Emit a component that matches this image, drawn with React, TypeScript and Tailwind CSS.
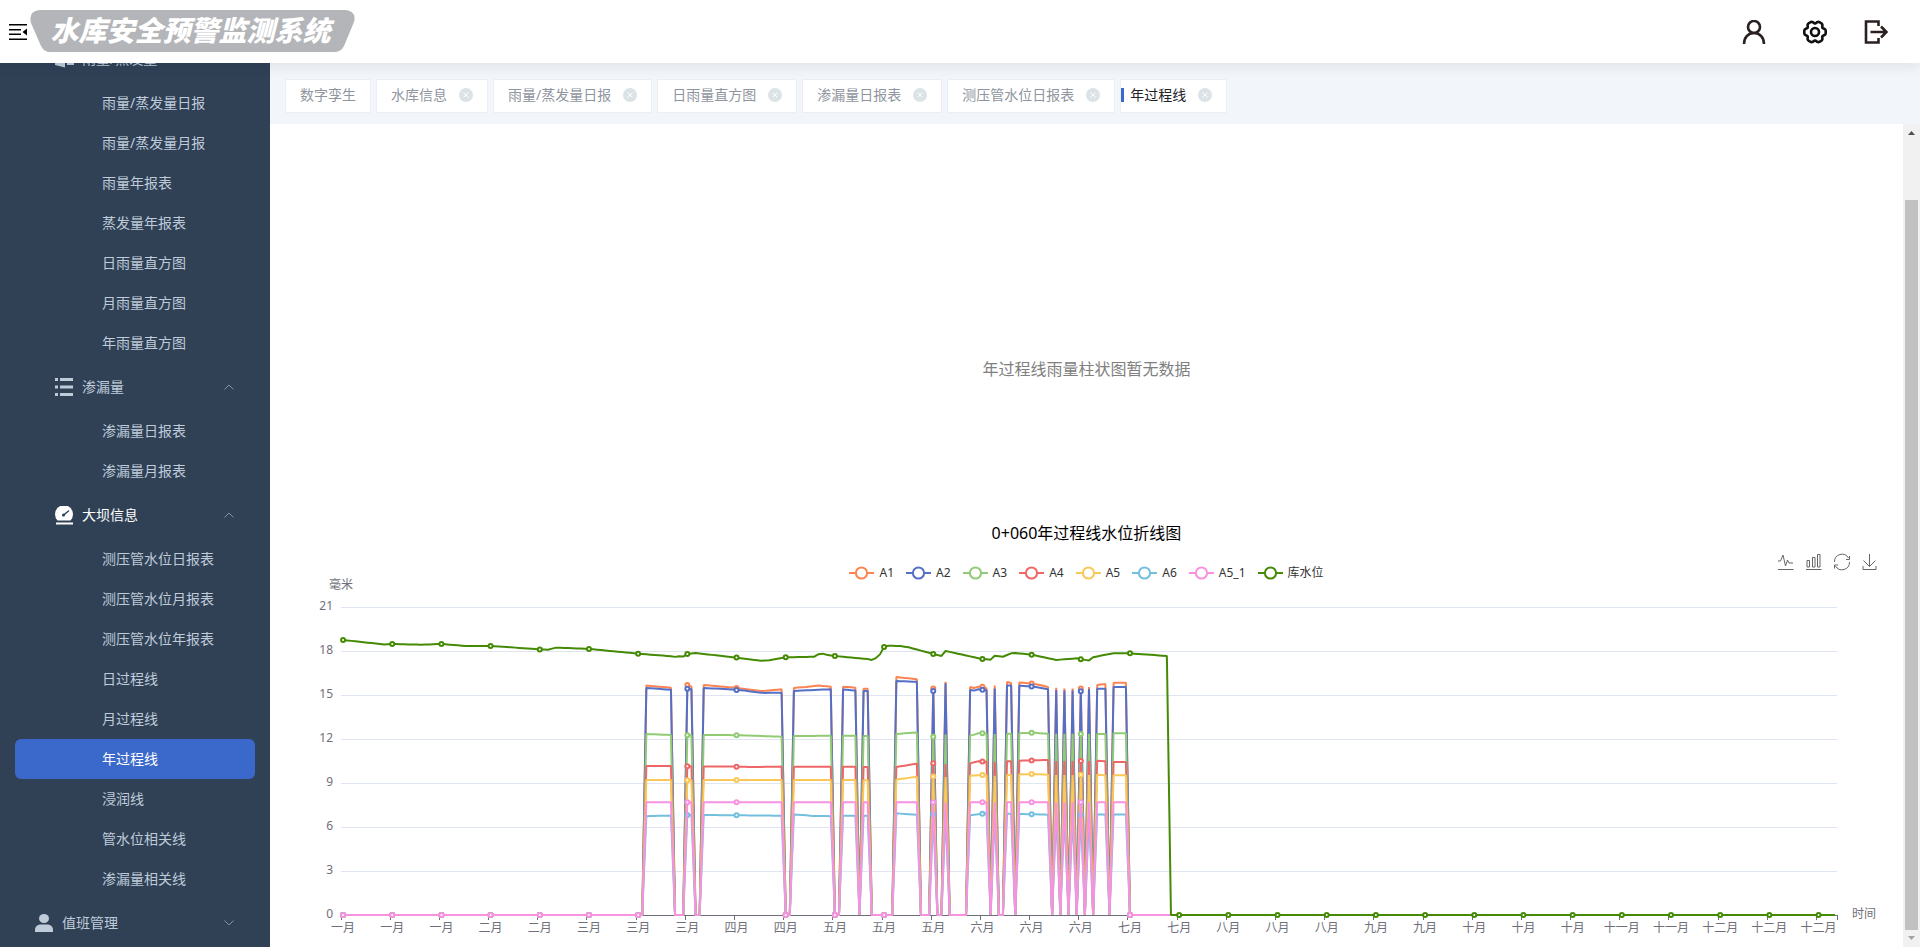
import { useLayoutEffect, useRef, useState } from "react";
import clsx from "clsx";

type Series = { name: string; color: string };
type Segment = { from: number; to: number; values: number[][] };

const MENU_RAIN = ["雨量/蒸发量日报", "雨量/蒸发量月报", "雨量年报表", "蒸发量年报表", "日雨量直方图", "月雨量直方图", "年雨量直方图"];
const MENU_SEEPAGE = ["渗漏量日报表", "渗漏量月报表"];
const MENU_DAM = ["测压管水位日报表", "测压管水位月报表", "测压管水位年报表", "日过程线", "月过程线", "年过程线", "浸润线", "管水位相关线", "渗漏量相关线"];

const TABS = ["数字孪生", "水库信息", "雨量/蒸发量日报", "日雨量直方图", "渗漏量日报表", "测压管水位日报表", "年过程线"];
const ACTIVE = "年过程线";

const SERIES: Series[] = [
  { name: "A1", color: "#fc8452" },
  { name: "A2", color: "#5470c6" },
  { name: "A3", color: "#91cc75" },
  { name: "A4", color: "#ee6666" },
  { name: "A5", color: "#fac858" },
  { name: "A6", color: "#73c0de" },
  { name: "A5_1", color: "#f892e0" },
  { name: "库水位", color: "#458a05" },
];

// day ranges with readings; outside of them the gauges report 0
const SEGMENTS: Segment[] = [
  { from: 74, to: 80, values: [[15.64, 15.5], [15.48, 15.36], [12.34, 12.27], [10.16], [9.2], [6.74, 6.78]] },
  { from: 84, to: 85, values: [[15.68, 15.57], [15.43, 15.4], [12.25], [10.14], [9.18], [6.82]] },
  { from: 88, to: 107, values: [[15.68, 15.57, 15.43, 15.27, 15.39], [15.48, 15.41, 15.32, 15.14, 15.16], [12.27, 12.27, 12.25, 12.2, 12.16], [10.12, 10.12, 10.09, 10.12], [9.2], [6.82, 6.77]] },
  { from: 110, to: 119, values: [[15.48, 15.55, 15.64, 15.57], [15.27, 15.34, 15.39], [12.2, 12.22], [10.11], [9.2], [6.86, 6.76, 6.74]] },
  { from: 122, to: 125, values: [[15.57, 15.5], [15.38, 15.3], [12.23], [10.11], [9.2], [6.77]] },
  { from: 127, to: 128, values: [[15.43], [15.27], [12.2], [10.09], [9.18], [6.77]] },
  { from: 135, to: 140, values: [[16.23, 16.07], [15.95, 15.9], [12.34, 12.45], [10.09, 10.32], [9.23, 9.43], [6.93, 6.84]] },
  { from: 144, to: 144, values: [[15.45], [15.27], [12.16], [10.34], [9.45], [6.86]] },
  { from: 147, to: 147, values: [[15.9], [15.8], [12.3], [10.3], [9.4], [6.86]] },
  { from: 153, to: 157, values: [[15.55, 15.48, 15.57, 15.57, 15.45], [15.34, 15.3, 15.39, 15.36, 15.32], [12.23, 12.3, 12.39, 12.39, 12.36], [10.34, 10.48, 10.45], [9.5, 9.55], [6.8, 6.93]] },
  { from: 159, to: 159, values: [[15.64], [15.45], [12.34], [10.45], [9.5], [6.9]] },
  { from: 162, to: 163, values: [[15.89, 15.82], [15.64], [12.36], [10.48], [9.55], [6.9]] },
  { from: 165, to: 172, values: [[15.86, 15.77, 15.55], [15.64, 15.57, 15.39], [12.39, 12.43, 12.36], [10.52, 10.57], [9.59, 9.61, 9.57], [6.89, 6.84]] },
  { from: 174, to: 174, values: [[15.5], [15.34], [12.36], [10.5], [9.55], [6.85]] },
  { from: 176, to: 176, values: [[15.45], [15.3], [12.36], [10.5], [9.55], [6.85]] },
  { from: 178, to: 178, values: [[15.45], [15.3], [12.36], [10.5], [9.55], [6.85]] },
  { from: 180, to: 180, values: [[15.45], [15.25], [12.34], [10.5], [9.57], [6.82]] },
  { from: 182, to: 182, values: [[15.55], [15.4], [12.36], [10.5], [9.55], [6.85]] },
  { from: 184, to: 186, values: [[15.68, 15.75], [15.43], [12.34], [10.52, 10.48], [9.57, 9.52], [6.86]] },
  { from: 188, to: 191, values: [[15.84], [15.55], [12.39], [10.43], [9.52], [6.86]] },
];

// [day of year, level] for the reservoir
const LEVELS: number[][] = [
  [0, 18.75], [10, 18.45], [12, 18.48], [19, 18.43], [24, 18.48], [30, 18.34], [36, 18.34], [42, 18.23], [48, 18.11],
  [50, 18.09], [52, 18.23], [60, 18.14], [72, 17.82], [80, 17.64], [81, 17.6], [82, 17.64], [83, 17.62], [84, 17.8],
  [86, 17.86], [96, 17.55], [100, 17.4], [102, 17.34], [104, 17.37], [108, 17.57], [115, 17.61], [116, 17.78],
  [117, 17.82], [118, 17.74], [120, 17.66], [128, 17.45], [129, 17.39], [130, 17.52], [131, 17.77], [132, 18.27],
  [133, 18.36], [136, 18.34], [138, 18.25], [144, 17.8], [146, 17.66], [147, 18], [156, 17.45], [158, 17.41],
  [159, 17.68], [161, 17.61], [163, 17.84], [164, 17.86], [168, 17.75], [174, 17.39], [179, 17.5], [180, 17.43],
  [182, 17.36], [183, 17.57], [186, 17.75], [188, 17.84], [192, 17.84], [201, 17.66], [202, 0], [364, 0],
];

const MONTHS = [
  "一月", "一月", "一月", "二月", "二月", "三月", "三月", "三月", "四月", "四月", "五月", "五月", "五月", "六月", "六月", "六月",
  "七月", "七月", "八月", "八月", "八月", "九月", "九月", "十月", "十月", "十月", "十一月", "十一月", "十二月", "十二月", "十二月",
];

const DAYS = 365;
const LABEL_STEP = 12;

function sample(values: number[], t: number) {
  const pos = t * (values.length - 1);
  const i = Math.min(Math.floor(pos), values.length - 1);
  const next = values[Math.min(i + 1, values.length - 1)];
  return values[i] + (next - values[i]) * (pos - i);
}

function gaugeData(index: number): number[] {
  const data: number[] = new Array(203).fill(0);
  SEGMENTS.forEach((seg) => {
    const values = index === 6 ? [7.68] : seg.values[index];
    for (let d = seg.from; d <= seg.to; d++) {
      data[d] = sample(values, seg.to === seg.from ? 0 : (d - seg.from) / (seg.to - seg.from));
    }
  });
  return data;
}

function reservoirData(): number[] {
  const data: number[] = [];
  for (let k = 0; k < LEVELS.length - 1; k++) {
    const [d0, v0] = LEVELS[k];
    const [d1, v1] = LEVELS[k + 1];
    for (let d = d0; d < d1; d++) data.push(v0 + ((v1 - v0) * (d - d0)) / (d1 - d0));
  }
  data.push(0);
  return data;
}

const DATA = SERIES.map((_, i) => (i === 7 ? reservoirData() : gaugeData(i)));

// outline of the settings cog: a circle with six soft lobes
const COG = Array.from({ length: 72 }, (_, i) => {
  const a = (i / 72) * Math.PI * 2;
  const r = 10 + 1.1 * Math.cos(6 * a) - 0.4 * Math.cos(12 * a);
  return `${(13 + r * Math.cos(a)).toFixed(2)},${(13 + r * Math.sin(a)).toFixed(2)}`;
}).join(" ");

function LineChart() {
  const box = useRef<HTMLDivElement>(null);
  const [width, setWidth] = useState(1633);

  useLayoutEffect(() => {
    const el = box.current;
    if (!el) return;
    const update = () => setWidth(el.clientWidth);
    update();
    const observer = new ResizeObserver(update);
    observer.observe(el);
    return () => observer.disconnect();
  }, []);

  const left = 71;
  const right = width - 66;
  const bottom = 334;
  const band = (right - left) / DAYS;
  const x = (day: number) => left + band * (day + 0.5);
  const y = (v: number) => bottom - (v * 44) / 3;

  return (
    <div ref={box} className="w-full">
      <svg width={width} height={366} className="block overflow-visible text-xs" fill="#6e7079">
        <text x={left} y={8} textAnchor="middle">毫米</text>
        {[0, 3, 6, 9, 12, 15, 18, 21].map((v) => (
          <g key={v}>
            {v > 0 && <line x1={left} x2={right} y1={y(v) + 0.5} y2={y(v) + 0.5} stroke="#e0e6f1" shapeRendering="crispEdges" />}
            <text x={left - 8} y={y(v) + 3} textAnchor="end">{v}</text>
          </g>
        ))}
        <line x1={left} x2={right} y1={bottom + 0.5} y2={bottom + 0.5} stroke="#6e7079" shapeRendering="crispEdges" />
        {MONTHS.map((m, k) => (
          <g key={k}>
            <line x1={left + band * LABEL_STEP * k} x2={left + band * LABEL_STEP * k} y1={bottom} y2={bottom + 5} stroke="#6e7079" shapeRendering="crispEdges" />
            <text x={x(k * LABEL_STEP)} y={bottom + 17} textAnchor="middle">{m}</text>
          </g>
        ))}
        <line x1={right} x2={right} y1={bottom} y2={bottom + 5} stroke="#6e7079" shapeRendering="crispEdges" />
        <text x={right + 15} y={bottom + 3}>时间</text>
        {SERIES.map((s, i) => (
          <g key={s.name} stroke={s.color} strokeWidth={2}>
            <polyline fill="none" strokeLinejoin="bevel" points={DATA[i].map((v, d) => `${x(d)},${y(v)}`).join(" ")} />
            {DATA[i].map((v, d) => (d % LABEL_STEP === 0 ? <circle key={d} cx={x(d)} cy={y(v)} r={2} fill="#fff" /> : null))}
          </g>
        ))}
      </svg>
    </div>
  );
}

function Chevron({ up }: { up?: boolean }) {
  return (
    <svg width="10" height="6" viewBox="0 0 10 6" className="ml-auto" fill="none" stroke="#8792a0">
      <path d={up ? "M0.5 5.5 5 1 9.5 5.5" : "M0.5 0.5 5 5 9.5 0.5"} />
    </svg>
  );
}

function MenuGroup({ title, icon, items, active }: { title: string; icon: React.ReactNode; items: string[]; active?: boolean }) {
  return (
    <div>
      <button className={clsx("flex h-12 w-full items-center gap-2 pr-9 pl-[55px]", active && "text-white")}>
        {icon}
        <span>{title}</span>
        <Chevron up />
      </button>
      {items.map((item) => (
        <a
          key={item}
          href="#"
          className={clsx("mx-[15px] flex h-10 items-center rounded-md pl-[87px]", item === ACTIVE && "bg-[#3b69cb] text-white")}
        >
          {item}
        </a>
      ))}
    </div>
  );
}

function Sidebar() {
  return (
    <nav className="flex w-[270px] shrink-0 flex-col justify-end overflow-hidden bg-[#304156] text-sm text-[#bfcbd9]">
      <MenuGroup
        title="雨量/蒸发量"
        items={MENU_RAIN}
        icon={
          <svg width="19" height="18" viewBox="0 0 19 18" fill="currentColor">
            <path d="M0 2h10v15.500L0 15zM12 6h7v9h-7z" />
          </svg>
        }
      />
      <MenuGroup
        title="渗漏量"
        items={MENU_SEEPAGE}
        icon={
          <svg width="19" height="18" viewBox="0 0 19 18" fill="currentColor">
            <path d="M5 0h13v3H5zM5 7.500h13v3H5zM5 15h13v3H5zM0 0h3v3H0zM0 7.500h3v3H0zM0 15h3v3H0z" />
          </svg>
        }
      />
      <MenuGroup
        title="大坝信息"
        items={MENU_DAM}
        active
        icon={
          <svg width="19" height="19" viewBox="0 0 19 19" fill="currentColor">
            <path d="M2.500 14.500A9 9 0 1 1 15.500 14.500z" />
            <path d="M1 16.500h17v2H1z" />
            <path d="M8 9.500 13.500 5" stroke="#304156" strokeWidth="1.500" strokeLinecap="round" />
            <circle cx="8.500" cy="9" r="1.500" fill="#304156" />
          </svg>
        }
      />
      <button className="flex h-12 w-full shrink-0 items-center gap-2 pr-9 pl-[35px]">
        <svg width="19" height="18" viewBox="0 0 19 18" fill="currentColor">
          <ellipse cx="9" cy="4.500" rx="5" ry="4.500" />
          <path d="M0 18v-2c0-4 3-5.500 6-5.500h6c3 0 6 1.500 6 5.500v2z" />
        </svg>
        <span>值班管理</span>
        <Chevron />
      </button>
    </nav>
  );
}

function Header() {
  return (
    <header className="relative z-10 flex h-[63px] shrink-0 items-center bg-white pr-8 pl-2 shadow-[0_4px_12px_rgba(0,21,41,0.08)]">
      <button aria-label="折叠菜单">
        <svg width="20" height="18" viewBox="0 0 20 18" fill="#000">
          <path d="M1 1h18v1.500H1zM1 6h12v1.500H1zM1 10.500h12V12H1zM1 15.500h18V17H1zM19 5.500v7l-4.500-3.500z" />
        </svg>
      </button>
      <h1 className="relative mb-px ml-[2px] flex h-[42px] w-[325px] items-center justify-center pr-1 pb-0.5 text-[28px] font-black text-white italic">
        <svg className="absolute inset-0" width="325" height="42" viewBox="0 0 325 42" fill="#b4b5b9">
          <path d="M10 0H315Q327 1 324 12L314 36Q311 42 304 42H20Q14 42 11 36L1 13Q-2 1 10 0z" />
        </svg>
        <span className="relative">水库安全预警监测系统</span>
      </h1>
      <div className="ml-auto flex items-center gap-9">
        <button aria-label="用户">
          <svg width="24" height="24" viewBox="0 0 24 24" fill="none" stroke="#2a2020" strokeWidth="2.600">
            <circle cx="12" cy="7" r="6" />
            <path d="M2 24c0-6.500 4-11 10-11s10 4.500 10 11" />
          </svg>
        </button>
        <button aria-label="设置">
          <svg width="26" height="26" viewBox="0 0 26 26" fill="none" stroke="#111" strokeWidth="2.600" strokeLinejoin="round">
            <polygon points={COG} />
            <circle cx="13" cy="13" r="4" />
          </svg>
        </button>
        <button aria-label="退出">
          <svg width="24" height="24" viewBox="0 0 24 24" fill="none" stroke="#2a2020" strokeWidth="2.600">
            <path d="M14.500 6V1.500H2v21h12.500V18M6.500 12H22.500M17 6.500l5.500 5.500-5.500 5.500" />
          </svg>
        </button>
      </div>
    </header>
  );
}

function TabBar() {
  return (
    <div className="flex h-[61px] shrink-0 items-center gap-[5px] bg-[#f2f6fa] pt-1 pl-[15px] text-sm text-[#8f959e]">
      {TABS.map((tab, i) => (
        <div
          key={tab}
          className={clsx("flex h-[34px] items-center border border-[#ebeff5] bg-white pr-3.5 pb-0.5", tab === ACTIVE ? "text-[#1f2328]" : "pl-3.5")}
        >
          {tab === ACTIVE && <span className="mr-1.5 h-3.5 w-[3px] bg-[#3b69cb]" />}
          <a href="#">{tab}</a>
          {i > 0 && (
            <button aria-label="关闭" className="ml-3">
              <svg width="14" height="14" viewBox="0 0 14 14" className="block">
                <circle cx="7" cy="7" r="7" fill="#dbe3e7" />
                <path d="M4.500 4.500l5 5M9.500 4.500l-5 5" stroke="#fff" />
              </svg>
            </button>
          )}
        </div>
      ))}
    </div>
  );
}

function Legend() {
  return (
    <ul className="flex items-center justify-center gap-3 text-xs text-[#333]">
      {SERIES.map((s) => (
        <li key={s.name} className="flex items-center gap-[5px]">
          <svg width="25" height="14" viewBox="0 0 25 14" fill="#fff" stroke={s.color} strokeWidth="2">
            <path d="M0 7h25" />
            <circle cx="12.500" cy="7" r="5.600" />
          </svg>
          {s.name}
        </li>
      ))}
    </ul>
  );
}

function Toolbox() {
  return (
    <div className="absolute top-2 right-6 flex gap-2.5">
      <button aria-label="切换为折线图">
        <svg width="18" height="18" viewBox="0 0 18 18" fill="none" stroke="#666">
          <path d="M1 8h2.500L6 2l2.500 11 2-6 1.500 3h4M1 16.500h15.500" />
        </svg>
      </button>
      <button aria-label="切换为柱状图">
        <svg width="18" height="18" viewBox="0 0 18 18" fill="none" stroke="#666">
          <path d="M2 7.500h2.500v6.500H2zM7.500 4.500H10V14H7.500zM12.500 1.500H15V14h-2.500zM1 16.500h15.500" />
        </svg>
      </button>
      <button aria-label="还原">
        <svg width="18" height="18" viewBox="0 0 18 18" fill="none" stroke="#666">
          <path d="M1.500 9a7.500 7.500 0 0 1 14-4M16.500 3v3.500H13M16.500 9a7.500 7.500 0 0 1-14 4M1.500 15.500V12H5" />
        </svg>
      </button>
      <button aria-label="保存为图片">
        <svg width="18" height="18" viewBox="0 0 18 18" fill="none" stroke="#666">
          <path d="M8.500 1v12M2.500 7.500l6 6 6-6M2 13v3.500h13V13" />
        </svg>
      </button>
    </div>
  );
}

function Scrollbar() {
  return (
    <div className="flex w-[17px] shrink-0 flex-col items-center bg-[#f1f1f1]">
      <svg width="17" height="17" viewBox="0 0 17 17" fill="#505050">
        <path d="M5 11h7L8.500 7z" />
      </svg>
      <div className="mt-[59px] w-[13px] flex-1 bg-[#c1c1c1]" />
      <svg width="17" height="17" viewBox="0 0 17 17" fill="#a3a3a3">
        <path d="M5 6h7l-3.500 4z" />
      </svg>
    </div>
  );
}

export default function App() {
  return (
    <div className="flex h-screen flex-col overflow-hidden bg-white font-['Noto_Sans','Noto_Sans_CJK_SC',sans-serif]">
      <Header />
      <div className="flex min-h-0 flex-1">
        <Sidebar />
        <div className="flex min-w-0 flex-1 flex-col">
          <TabBar />
          <div className="flex min-h-0 flex-1">
            <main className="flex min-w-0 flex-1 flex-col overflow-hidden">
              <p className="flex min-h-0 flex-1 items-end justify-center pb-[140px] text-base text-[#808080]">年过程线雨量柱状图暂无数据</p>
              <h2 className="text-center text-base text-black">0+060年过程线水位折线图</h2>
              <section className="relative shrink-0 pt-5">
                <Legend />
                <Toolbox />
                <LineChart />
              </section>
            </main>
            <Scrollbar />
          </div>
        </div>
      </div>
    </div>
  );
}
